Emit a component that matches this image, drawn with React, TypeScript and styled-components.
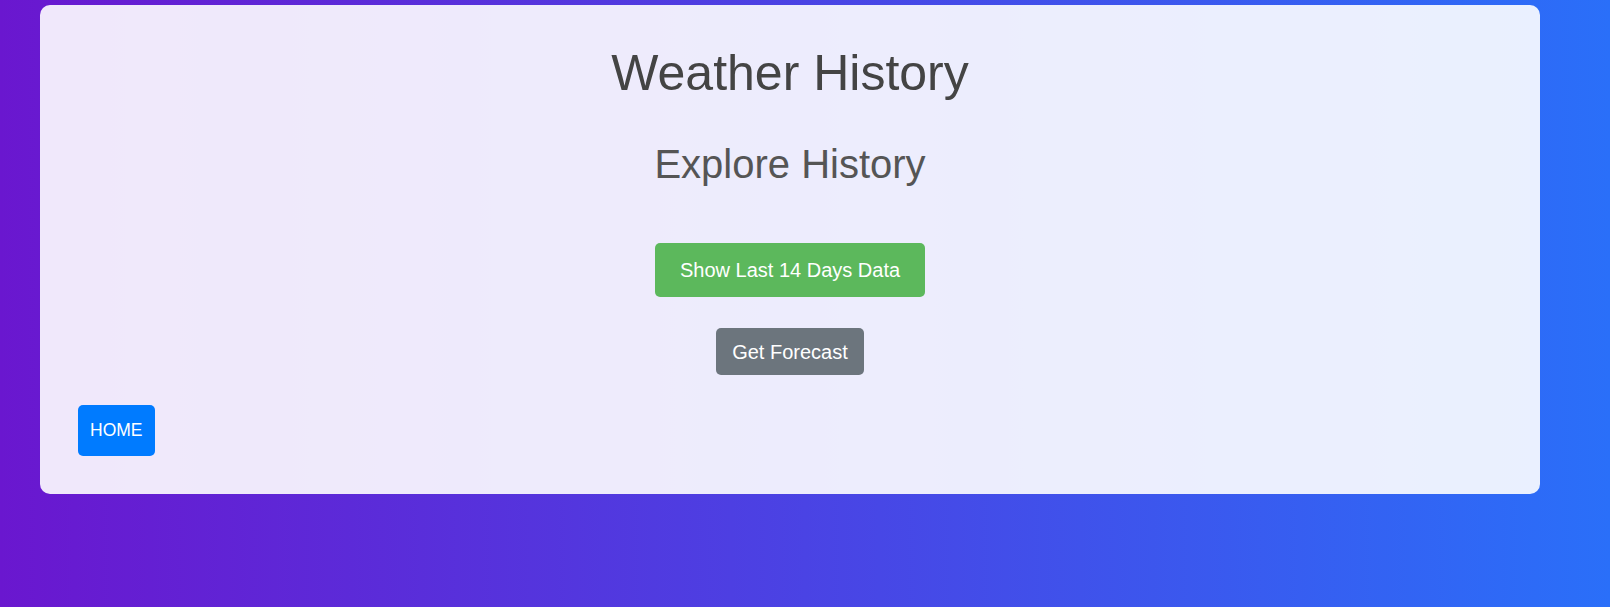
import React from "react";
import styled, { createGlobalStyle } from "styled-components";

const GlobalStyle = createGlobalStyle`
  html, body { margin: 0; padding: 0; }
  body { font-family: "Liberation Sans", Arial, sans-serif; }
`;

const Page = styled.div`
  min-height: 100vh;
  box-sizing: border-box;
  background: linear-gradient(to right, #6a17cf, #2a6ff9);
  padding: 5px 0 0 40px;
`;

const Card = styled.div`
  width: 1500px;
  box-sizing: border-box;
  background: rgba(255, 255, 255, 0.9);
  border-radius: 10px;
  padding: 40px 38px 38px;
  display: flex;
  flex-direction: column;
`;

const Title = styled.h1`
  margin: 0;
  font-size: 50px;
  line-height: 57px;
  font-weight: 400;
  color: #444;
  text-align: center;
`;

const Subtitle = styled.h2`
  margin: 39px 0 0;
  font-size: 40px;
  line-height: 46px;
  font-weight: 400;
  color: #555;
  text-align: center;
`;

const Actions = styled.div`
  display: flex;
  flex-direction: column;
  align-items: center;
  gap: 31px;
  margin-top: 56px;
`;

const Button = styled.button<{ $variant: "success" | "secondary" | "primary" }>`
  border: none;
  cursor: pointer;
  color: #fff;
  font-family: "Liberation Sans", Arial, sans-serif;
  font-size: ${(p) => (p.$variant === "primary" ? "17.5px" : "20px")};
  border-radius: 5px;
  background: ${(p) =>
    p.$variant === "success" ? "#5cb85c" : p.$variant === "secondary" ? "#6c757d" : "#007bff"};
  height: ${(p) => (p.$variant === "success" ? "54px" : p.$variant === "secondary" ? "47px" : "51px")};
  padding: ${(p) => (p.$variant === "success" ? "0 25px" : p.$variant === "secondary" ? "0 16.5px" : "0 12px")};
  line-height: 1;
`;

const HomeRow = styled.div`
  display: flex;
  margin-top: 30px;
`;

export default function App() {
  return (
    <>
      <GlobalStyle />
      <Page>
        <Card>
          <Title>Weather History</Title>
          <Subtitle>Explore History</Subtitle>
          <Actions>
            <Button $variant="success">Show Last 14 Days Data</Button>
            <Button $variant="secondary">Get Forecast</Button>
          </Actions>
          <HomeRow>
            <Button $variant="primary">HOME</Button>
          </HomeRow>
        </Card>
      </Page>
    </>
  );
}
